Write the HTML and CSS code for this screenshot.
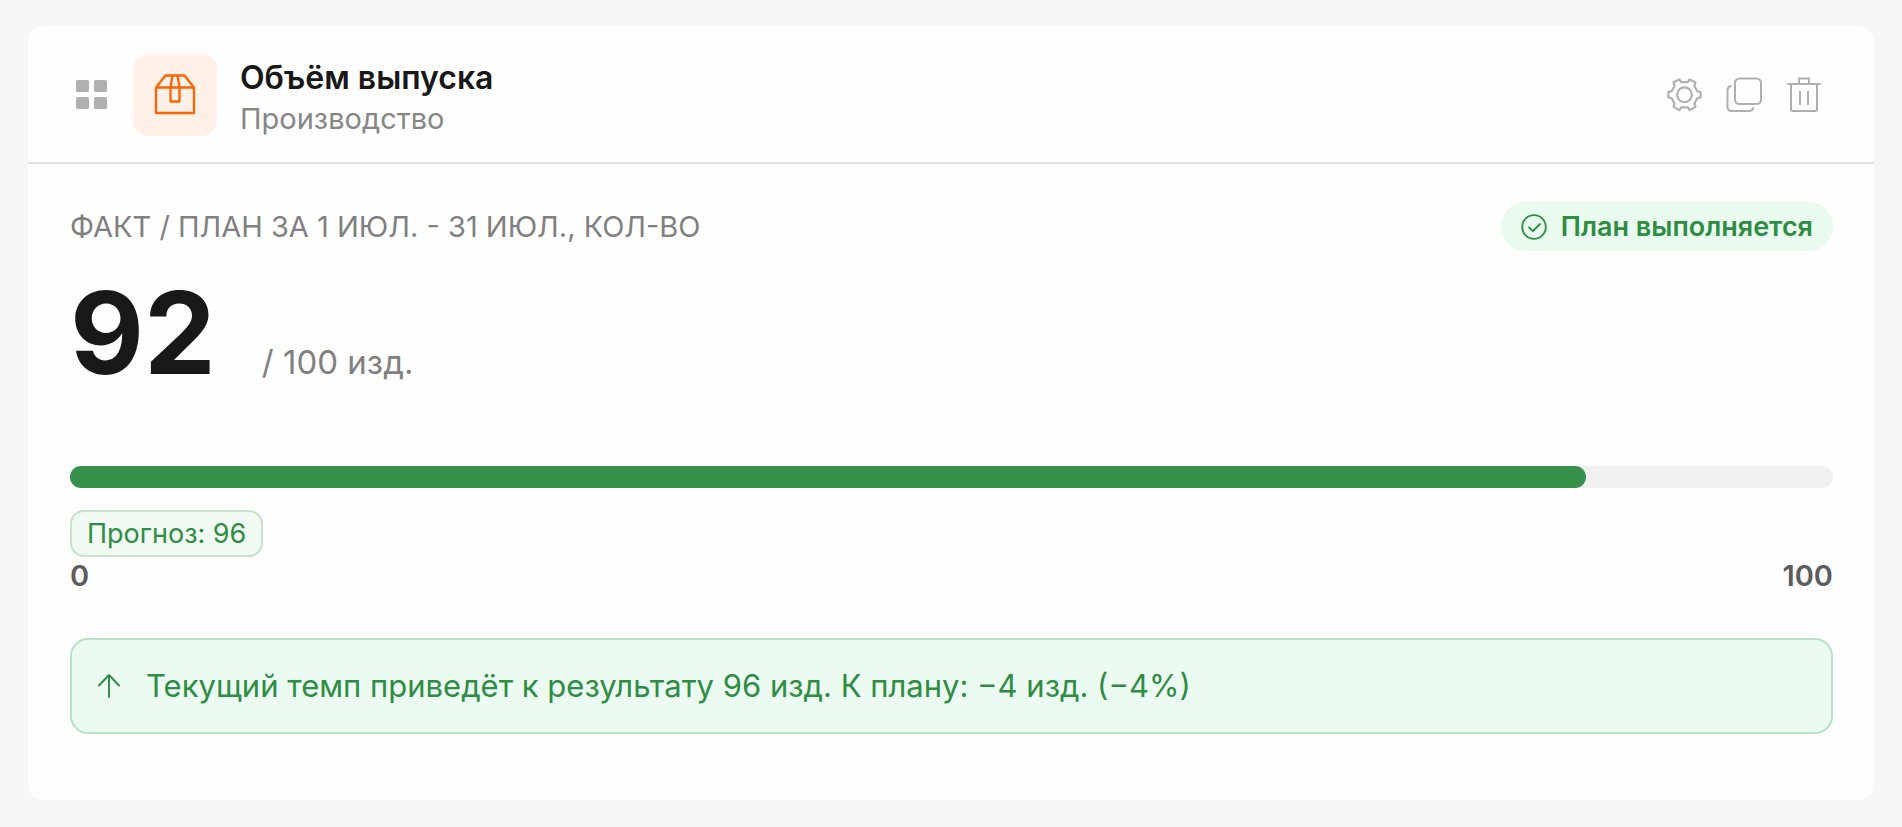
FILE: index.html
```html
<!DOCTYPE html>
<html lang="ru">
<head>
<meta charset="utf-8">
<meta name="viewport" content="width=device-width, initial-scale=1">
<title>Объём выпуска</title>
<link rel="stylesheet" href="styles.css">
</head>
<body>
<main class="card">
  <header class="card-header">
    <button class="icon-button drag" type="button" aria-label="Переместить">
      <svg width="32" height="32" viewBox="0 0 32 32" fill="#b0b0b0"><rect x="1" y="1" width="13" height="12" rx="1.5"/><rect x="19" y="1" width="13" height="12" rx="1.5"/><rect x="1" y="18" width="13" height="12" rx="1.5"/><rect x="19" y="18" width="13" height="12" rx="1.5"/></svg>
    </button>
    <span class="tile">
      <svg width="42" height="42" viewBox="0 0 42 42" fill="none" stroke="#fb6506" stroke-width="2.3" stroke-linejoin="round"><path d="M2 13.500 11.500 1.500h19L40 13.500V39H2zM2 13.500h38M18.500 1.500 16.500 13.500V27.500h9V13.500L23.500 1.500"/></svg>
    </span>
    <div class="heading">
      <h1 class="title">Объём выпуска</h1>
      <p class="subtitle">Производство</p>
    </div>
    <div class="actions">
      <button class="icon-button" type="button" aria-label="Настройки">
        <svg width="36" height="36" viewBox="-1 -0.5 38 38" fill="none" stroke="#b0b0b0" stroke-width="2.3" stroke-linejoin="round"><path d="M13 2 15 5h7L24 2 30 5 29 9 32 14.500 35.500 15.500v5.500L32 22 29 27.500 30 31 24 34.500 22 31.500h-7L13 34.500 7 31 8 27.500 5 22 1.500 21v-5.500L5 14.500 8 9 7 5z"/><circle cx="18.500" cy="18.200" r="7.800"/></svg>
      </button>
      <button class="icon-button" type="button" aria-label="Дублировать">
        <svg width="36" height="36" viewBox="0 0 36 36" fill="none" stroke="#b0b0b0" stroke-width="2" stroke-linecap="round"><rect x="9" y="1.500" width="26" height="25.500" rx="4.500"/><path d="M4.500 9Q1.500 10 1.500 13.500V30Q1.500 34 6 34H22.500Q26.500 34 27 31"/></svg>
      </button>
      <button class="icon-button" type="button" aria-label="Удалить">
        <svg width="36" height="36" viewBox="0 0 36 36" fill="none" stroke="#b0b0b0" stroke-width="2"><path d="M1.500 7h33M13 7V1.500h10V7M5 7V32.500q0 1.500 1.500 1.500h23q1.500 0 1.500-1.500V7M14 14v14M22 14v14"/></svg>
      </button>
    </div>
  </header>
  <section class="card-body">
    <div class="summary">
      <p class="label">ФАКТ / ПЛАН ЗА 1 ИЮЛ. - 31 ИЮЛ., КОЛ-ВО</p>
      <span class="badge">
        <svg width="26" height="26" viewBox="0 0 26 26" fill="none" stroke="#2f8c43" stroke-width="1.8" stroke-linecap="round" stroke-linejoin="round"><circle cx="13" cy="13" r="11.800"/><path d="m8 13.500 4 3.500 7-7"/></svg>
        План выполняется
      </span>
    </div>
    <p class="figures"><strong class="fact">92</strong><span class="plan">/ 100 изд.</span></p>
    <div class="track" role="progressbar" aria-label="Выполнение плана" aria-valuemin="0" aria-valuemax="100" aria-valuenow="92"><div class="fill"></div></div>
    <span class="forecast">Прогноз: 96</span>
    <div class="scale"><span>0</span><span>100</span></div>
    <p class="notice">
      <svg width="24" height="24" viewBox="0 0 24 24" fill="none" stroke="#2f8c43" stroke-width="1.9" stroke-linecap="round" stroke-linejoin="round"><path d="M12 23V1M2 11.500 12 1l10 10.500"/></svg>
      <span>Текущий темп приведёт к результату 96 изд. К плану: −4 изд. (−4%)</span>
    </p>
  </section>
</main>
</body>
</html>
```
FILE: styles.css
```css
* { box-sizing: border-box; }

body {
  margin: 0;
  padding: 26px 28px;
  background: #f7f7f7;
  color: #181818;
  font-family: Inter, "Liberation Sans", sans-serif;
}

h1, p { margin: 0; }

svg { display: block; flex: none; }

.card {
  background: #fefefe;
  border-radius: 16px;
  padding-bottom: 66px;
}

.card-header {
  display: flex;
  align-items: center;
  padding: 24px 52px 22px 47px;
  border-bottom: 2px solid #e0e0e0;
}

.icon-button {
  padding: 0;
  border: 0;
  background: none;
  cursor: pointer;
}

.tile {
  display: grid;
  place-items: center;
  width: 84px;
  height: 82px;
  margin-left: 26px;
  border-radius: 16px;
  background: #fff0e8;
}

.heading {
  flex: 1;
  margin-left: 23px;
  padding-top: 8px;
}

.title {
  font-size: 32px;
  line-height: 40px;
  font-weight: 600;
}

.subtitle {
  font-size: 29px;
  line-height: 42px;
  color: #868686;
}

.actions {
  display: flex;
  gap: 24px;
}

.card-body {
  display: flex;
  flex-direction: column;
  padding: 38px 41px 0 42px;
}

.summary {
  display: flex;
  align-items: center;
  justify-content: space-between;
}

.label {
  font-size: 29px;
  color: #808080;
}

.badge {
  display: flex;
  align-items: center;
  gap: 14px;
  height: 49px;
  padding: 0 20px;
  border-radius: 25px;
  background: #e9fbef;
  color: #2f8c43;
  font-size: 27px;
  font-weight: 600;
}

.figures {
  display: flex;
  align-items: baseline;
  gap: 46px;
  margin-top: 12px;
  line-height: 140px;
}

.fact {
  font-size: 114px;
  font-weight: 700;
}

.plan {
  font-size: 33px;
  color: #808080;
}

.track {
  height: 22px;
  margin-top: 34px;
  border-radius: 11px;
  background: #f0f0f0;
}

.fill {
  width: 86%;
  height: 100%;
  border-radius: 11px;
  background: #37914a;
}

.forecast {
  align-self: flex-start;
  height: 47px;
  margin-top: 22px;
  padding: 0 15px;
  border: 2px solid #c4e4cc;
  border-radius: 14px;
  background: #f0f9f2;
  color: #2f8c43;
  font-size: 27px;
  line-height: 43px;
}

.scale {
  display: flex;
  justify-content: space-between;
  color: #5c5c5c;
  font-size: 29px;
  line-height: 38px;
  font-weight: 600;
}

.notice {
  display: flex;
  align-items: center;
  gap: 25px;
  margin-top: 43px;
  padding: 26px 25px;
  border: 2px solid #b9e2c4;
  border-radius: 18px;
  background: #ebfbf1;
  color: #2f8c43;
  font-size: 31px;
  line-height: 40px;
}
```
